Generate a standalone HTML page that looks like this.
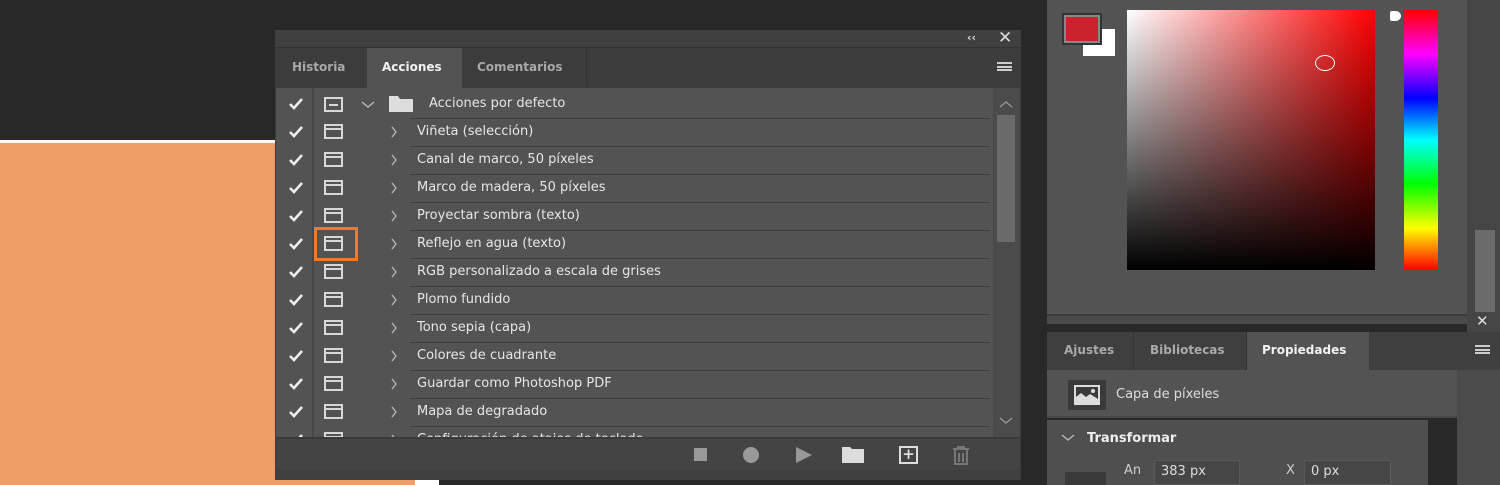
<!DOCTYPE html>
<html><head><meta charset="utf-8"><style>
*{margin:0;padding:0;box-sizing:border-box}
body{width:1500px;height:485px;overflow:hidden;background:#282828;position:relative;font-family:"DejaVu Sans","Liberation Sans",sans-serif;}
.a{position:absolute}
.t{color:#e6e6e6;font-size:13px;white-space:nowrap}
.chk{position:absolute;left:288px;width:16px;height:14px}
.ic{position:absolute;left:324px;width:19px;height:15px;border:2px solid #d8d8d8}
.ic.b:after{content:"";position:absolute;left:0;right:0;top:2px;height:2px;background:#d8d8d8}
.cv{position:absolute;left:390px;width:8px;height:12px}
.rl{position:absolute;left:410px;width:580px;height:1px;background:#3e3e3e}
</style></head><body>
<div class="a" style="left:0;top:140px;width:275px;height:345px;background:#f09d69;border-top:3px solid #fff"></div>
<div class="a" style="left:275px;top:478px;width:140px;height:7px;background:#f09d69"></div>
<div class="a" style="left:415px;top:480px;width:24px;height:5px;background:#fff"></div>

<div class="a" style="left:275px;top:30px;width:746px;height:450px;background:#3d3d3d"></div>
<div class="a" style="left:275px;top:30px;width:746px;height:18px;background:#404040;border-bottom:1px solid #333"></div>
<div class="a t" style="left:967px;top:31px;font-size:11px;color:#ddd;font-weight:bold">‹‹</div>
<div class="a t" style="left:998px;top:28px;font-size:17px;color:#ddd;font-weight:bold">✕</div>
<div class="a" style="left:275px;top:48px;width:746px;height:39px;background:#3c3c3c"></div>
<div class="a t" style="left:292px;top:60px;color:#a8a8a8;font-weight:bold;font-size:12px">Historia</div>
<div class="a" style="left:367px;top:48px;width:95px;height:40px;background:#535353"></div>
<div class="a t" style="left:382px;top:60px;color:#f2f2f2;font-weight:bold;font-size:12px">Acciones</div>
<div class="a" style="left:462px;top:48px;width:125px;height:39px;border-right:1px solid #333"></div>
<div class="a t" style="left:477px;top:60px;color:#a8a8a8;font-weight:bold;font-size:12px">Comentarios</div>
<div class="a" style="left:997px;top:62px;width:15px;height:9px;border-top:2px solid #ccc;border-bottom:2px solid #ccc"><div style="margin-top:1.5px;height:2px;background:#ccc"></div></div>
<div class="a" style="left:276px;top:88px;width:717px;height:350px;background:#535353"></div>
<div class="a" style="left:312px;top:88px;width:2px;height:350px;background:#484848"></div>
<div class="a" style="left:993px;top:88px;width:27px;height:350px;background:#4b4b4b"></div>
<div class="a" style="left:997px;top:115px;width:18px;height:127px;background:#6a6a6a"></div>
<svg class="a" style="left:999px;top:100px" width="14" height="8"><path d="M1 7l6-5 6 5" stroke="#999" fill="none" stroke-width="1.3"/></svg>
<svg class="a" style="left:999px;top:417px" width="14" height="8"><path d="M1 1l6 5 6-5" stroke="#999" fill="none" stroke-width="1.3"/></svg>

<div id="rows"></div>
<div class="a" style="left:314px;top:227px;width:44px;height:34px;border:3px solid #f07a2a"></div>

<div class="a" style="left:1047px;top:0;width:420px;height:314px;background:#535353"></div>
<div class="a" style="left:1047px;top:314px;width:420px;height:10px;background:#4a4a4a;border-top:2px solid #3a3a3a"></div>
<div class="a" style="left:1467px;top:0;width:33px;height:332px;background:#454545"></div>
<div class="a" style="left:1475px;top:230px;width:20px;height:82px;background:#6b6b6b"></div>
<div class="a t" style="left:1476px;top:312px;font-size:15px;color:#ddd;font-weight:bold">✕</div>
<div class="a" style="left:1083px;top:29px;width:32px;height:27px;background:#fff"></div>
<div class="a" style="left:1062px;top:13px;width:40px;height:32px;background:#888;border:2px solid #333;padding:2px"><div style="width:100%;height:100%;background:#c9222e"></div></div>
<div class="a" style="left:1127px;top:10px;width:248px;height:260px;background:linear-gradient(to bottom,rgba(0,0,0,0),#000),linear-gradient(to right,#fff,#ff0000)"></div>
<div class="a" style="left:1315px;top:55px;width:20px;height:16px;border:1.5px solid #fff;border-radius:50%"></div>
<div class="a" style="left:1404px;top:10px;width:34px;height:260px;background:linear-gradient(to bottom,#f00,#f0f 17%,#00f 34%,#0ff 50%,#0f0 67%,#ff0 84%,#f00)"></div>
<div class="a" style="left:1390px;top:11px;width:11px;height:10px;background:#fff;border-radius:2px 50% 50% 2px"></div>

<div class="a" style="left:1047px;top:332px;width:453px;height:38px;background:#3f3f3f"></div>
<div class="a" style="left:1133px;top:332px;width:1px;height:38px;background:#333"></div>
<div class="a" style="left:1246px;top:332px;width:1px;height:38px;background:#333"></div>
<div class="a t" style="left:1064px;top:343px;color:#aaa;font-weight:bold;font-size:12px">Ajustes</div>
<div class="a t" style="left:1150px;top:343px;color:#aaa;font-weight:bold;font-size:12px">Bibliotecas</div>
<div class="a" style="left:1247px;top:332px;width:122px;height:39px;background:#535353"></div>
<div class="a t" style="left:1262px;top:343px;color:#f2f2f2;font-weight:bold;font-size:12px">Propiedades</div>
<div class="a" style="left:1475px;top:345px;width:15px;height:9px;border-top:2px solid #ccc;border-bottom:2px solid #ccc"><div style="margin-top:1.5px;height:2px;background:#ccc"></div></div>
<div class="a" style="left:1047px;top:370px;width:410px;height:48px;background:#535353;border-bottom:2px solid #474747"></div>
<div class="a" style="left:1457px;top:370px;width:43px;height:115px;background:#4b4b4b"></div>
<div class="a" style="left:1068px;top:380px;width:38px;height:30px;background:#3a3a3a"></div>
<svg class="a" style="left:1074px;top:385px" width="26" height="20"><rect x="1" y="1" width="24" height="18" fill="none" stroke="#ddd" stroke-width="2"/><path d="M2 18V12l5-4 5 4 4-3 8 5v4z" fill="#ddd"/><circle cx="19" cy="6" r="2" fill="#ddd"/></svg>
<div class="a t" style="left:1116px;top:387px;color:#ddd;font-size:13px">Capa de píxeles</div>
<div class="a" style="left:1047px;top:420px;width:381px;height:65px;background:#4f4f4f"></div>
<svg class="a" style="left:1061px;top:434px" width="14" height="8"><path d="M1 1l6 5 6-5" stroke="#bbb" fill="none" stroke-width="1.4"/></svg>
<div class="a t" style="left:1087px;top:431px;color:#eee;font-weight:bold;font-size:13px">Transformar</div>
<div class="a t" style="left:1124px;top:463px;color:#ccc;font-size:13px">An</div>
<div class="a" style="left:1154px;top:460px;width:86px;height:25px;background:#464646;border:1px solid #5a5a5a"></div>
<div class="a t" style="left:1161px;top:464px;color:#ddd;font-size:13px">383 px</div>
<div class="a t" style="left:1286px;top:463px;color:#ccc;font-size:13px">X</div>
<div class="a" style="left:1304px;top:460px;width:87px;height:25px;background:#464646;border:1px solid #5a5a5a"></div>
<div class="a t" style="left:1311px;top:464px;color:#ddd;font-size:13px">0 px</div>
<div class="a" style="left:1065px;top:472px;width:41px;height:13px;background:#3a3a3a"></div>

<script>
var items=["Viñeta (selección)","Canal de marco, 50 píxeles","Marco de madera, 50 píxeles","Proyectar sombra (texto)","Reflejo en agua (texto)","RGB personalizado a escala de grises","Plomo fundido","Tono sepia (capa)","Colores de cuadrante","Guardar como Photoshop PDF","Mapa de degradado","Configuración de atajos de teclado"];
var h="";
function chk(y){return '<svg class="chk" style="top:'+(y-7)+'px" viewBox="0 0 16 14"><path d="M2 7l4 4 8-9" stroke="#eee" stroke-width="2.6" fill="none"/></svg>';}
h+=chk(104)+'<div class="ic" style="top:97px"></div><div class="a" style="left:329px;top:104px;width:9px;height:2px;background:#d8d8d8"></div>';
h+='<svg class="a" style="left:361px;top:101px" width="14" height="8"><path d="M1 1l6 5 6-5" stroke="#bbb" fill="none" stroke-width="1.3"/></svg>';
h+='<svg class="a" style="left:388px;top:95px" width="26" height="18"><path d="M1 1h9l2 3h13v13H1z" fill="#ddd"/></svg>';
h+='<div class="a t" style="left:429px;top:96px">Acciones por defecto</div>';
for(var i=0;i<items.length;i++){var y=132+28*i;
h+=chk(y)+'<div class="ic b" style="top:'+(y-8)+'px"></div><svg class="cv" style="top:'+(y-6)+'px" viewBox="0 0 8 12"><path d="M2 1l4 5-4 5" stroke="#bbb" fill="none" stroke-width="1.3"/></svg>';
h+='<div class="rl" style="top:'+(y-14)+'px"></div>';
h+='<div class="a t" style="left:417px;top:'+(y-8)+'px">'+items[i]+'</div>';}
document.getElementById('rows').innerHTML=h;
</script>
<div class="a" style="left:276px;top:437px;width:744px;height:33px;background:#444;border-top:2px solid #3a3a3a;z-index:1"></div>
<div class="a" style="left:694px;top:448px;width:13px;height:13px;background:#999;z-index:2"></div>
<div class="a" style="left:743px;top:447px;width:16px;height:16px;border-radius:50%;background:#999;z-index:2"></div>
<svg class="a" style="left:795px;top:446px;z-index:2" width="18" height="18"><path d="M1 1 L17 9 L1 17Z" fill="#999"/></svg>
<svg class="a" style="left:841px;top:446px;z-index:2" width="24" height="18"><path d="M1 1h8l2 2h12v14H1z" fill="#ddd"/></svg>
<div class="a" style="left:899px;top:446px;width:19px;height:18px;border:2px solid #ddd;color:#ddd;font-size:15px;line-height:13px;text-align:center;font-weight:bold;z-index:2">+</div>
<svg class="a" style="left:951px;top:445px;z-index:2" width="20" height="20"><path d="M2 4h16M7 4V2h6v2M4 5v14h12V5M8 8v9M12 8v9" stroke="#777" stroke-width="2" fill="none"/></svg>
<div class="a" style="left:276px;top:470px;width:744px;height:10px;background:#3f3f3f;z-index:1"></div>
</body></html>
